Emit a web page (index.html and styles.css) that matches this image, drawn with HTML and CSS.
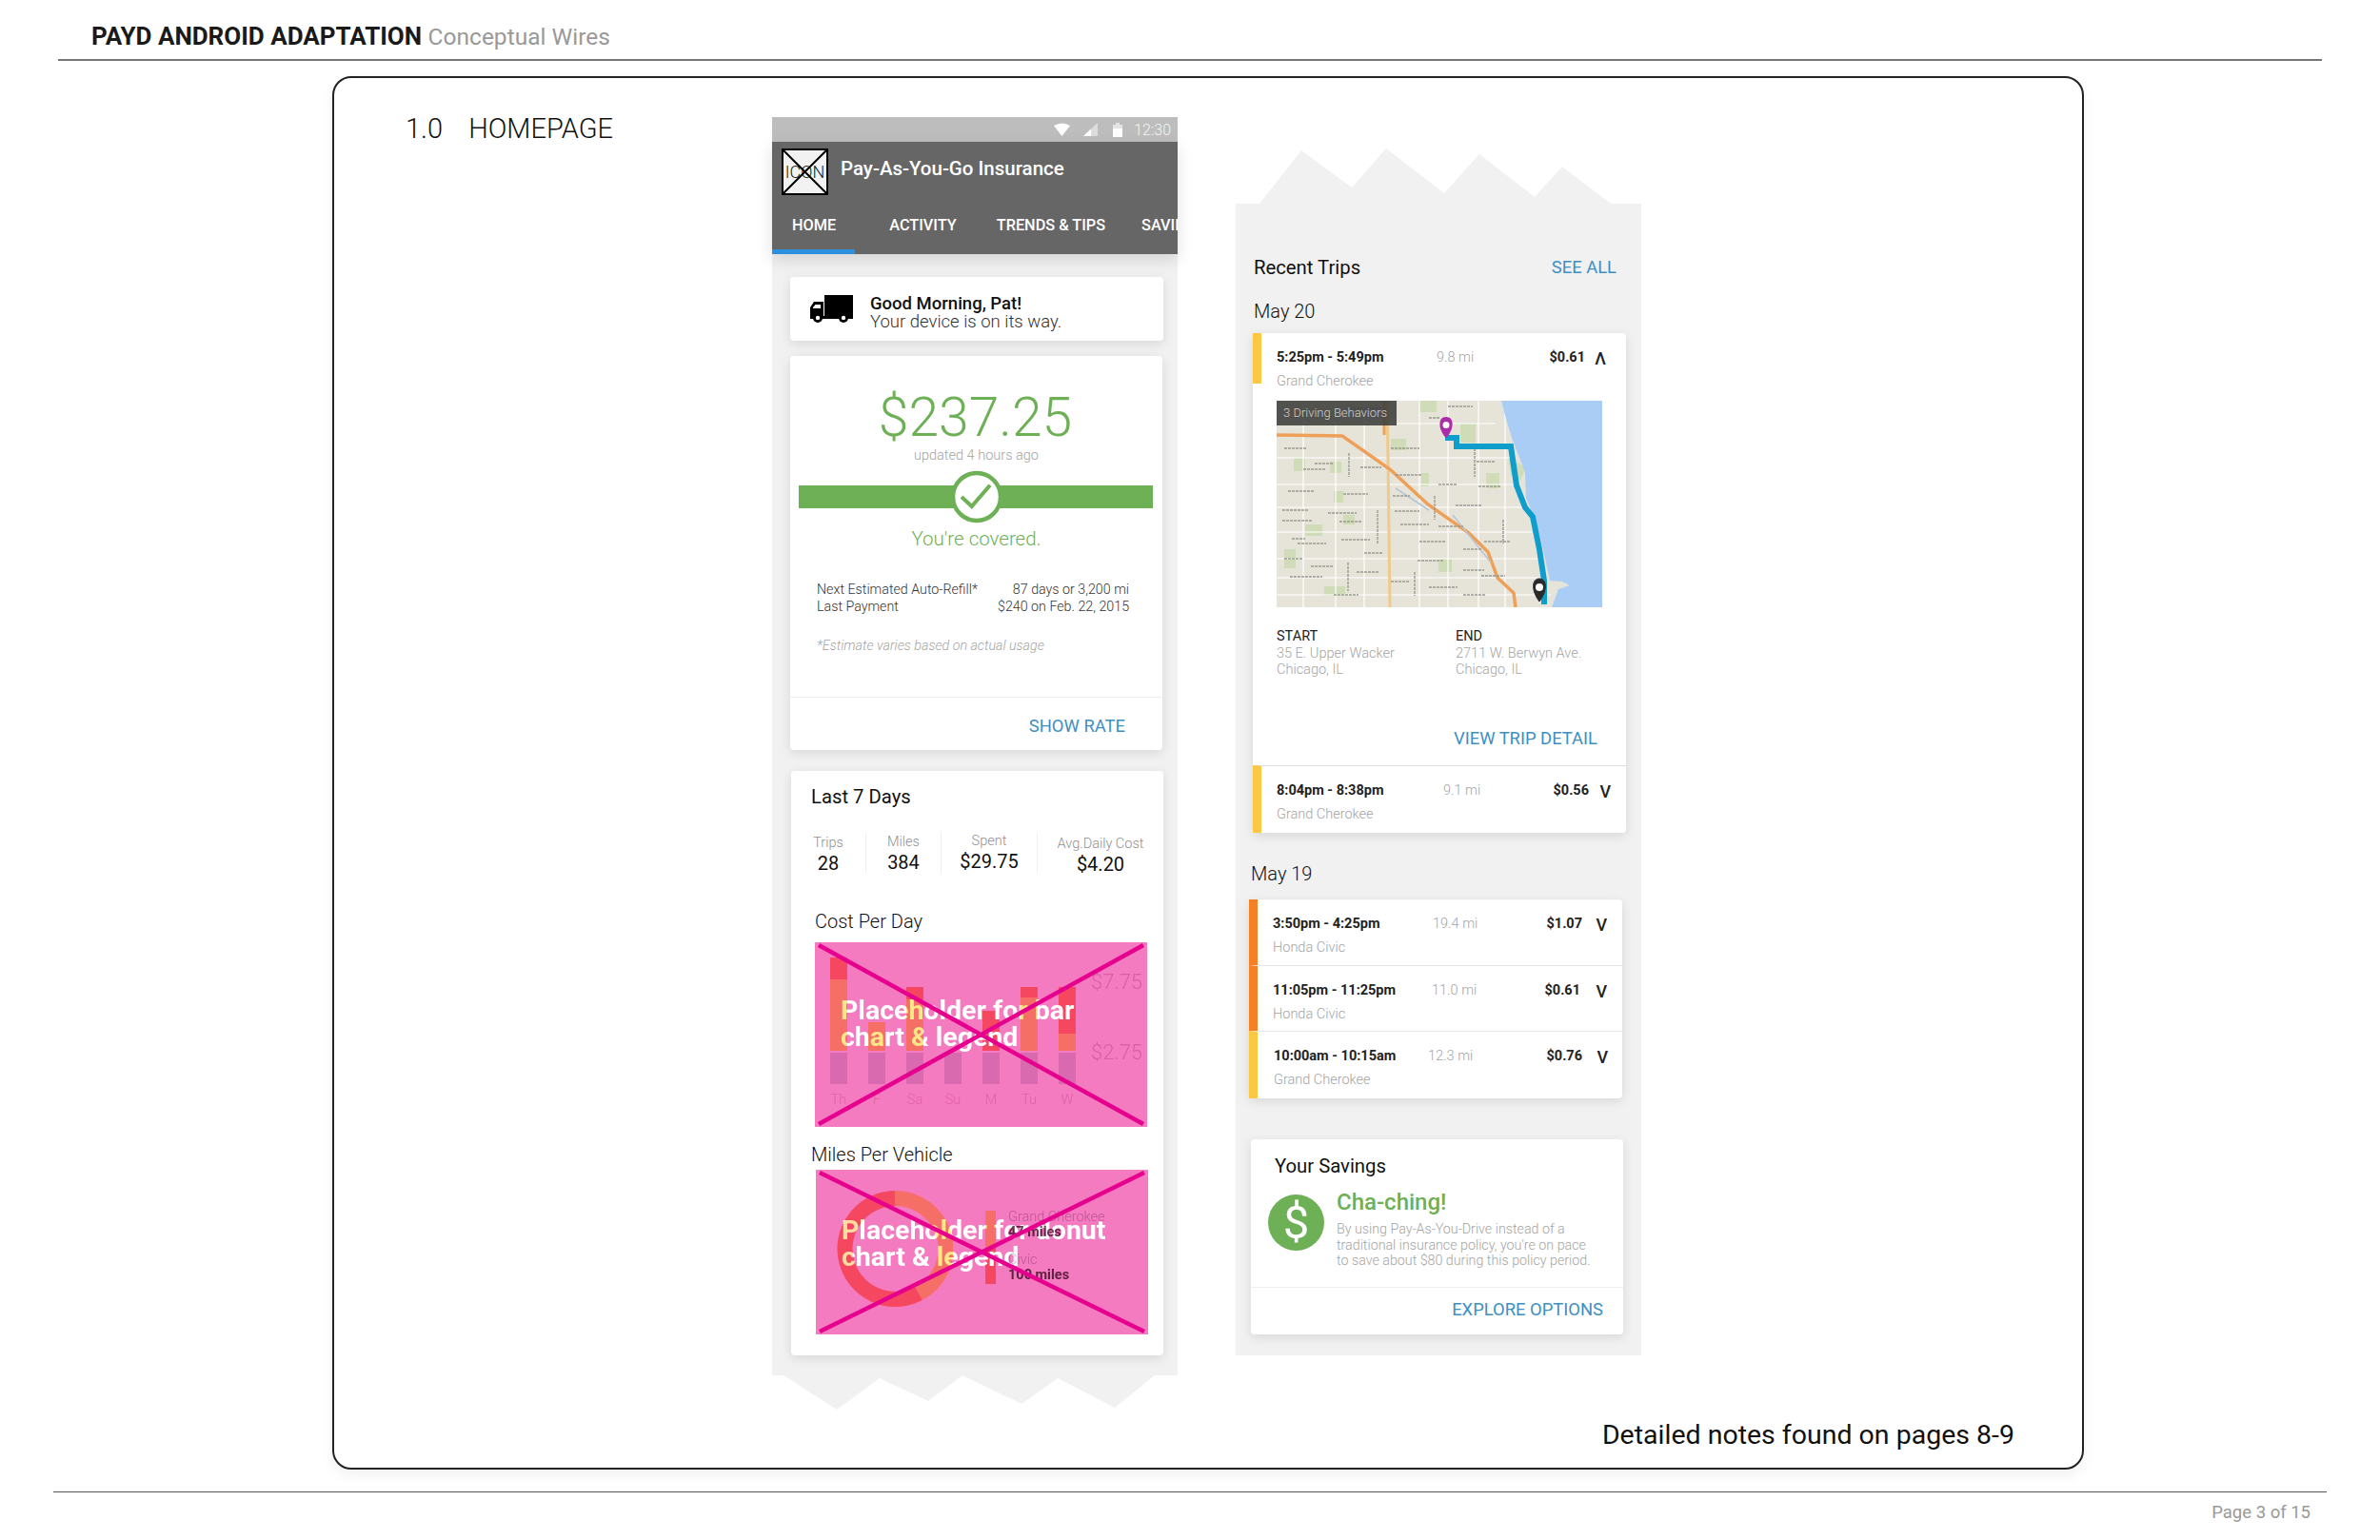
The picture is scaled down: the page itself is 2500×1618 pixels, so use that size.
FILE: index.html
```html
<!DOCTYPE html>
<html lang="en">
<head>
  <meta charset="UTF-8" />
  <title>PAYD Android Adaptation</title>
  <link rel="stylesheet" href="styles.css">
</head>
<body>

<header class="doc-head">
  <b>PAYD ANDROID ADAPTATION</b> <span>Conceptual Wires</span>
</header>

<main class="sheet">
  <div class="sheet-row">
    <h1 class="sheet-title"><span>1.0</span>HOMEPAGE</h1>

    <!-- Phone -->
    <section class="phone">
      <div class="status">
        <svg width="17" height="14" viewBox="0 0 17 14"><path d="M0 3Q8.500-2 17 3L8.500 14Z" fill="#fff"/></svg>
        <svg class="signal" width="15" height="14" viewBox="0 0 15 14"><path d="M0 14L15 0V14Z" fill="#ddd"/><path d="M0 14L8 6.500V14Z" fill="#fff"/></svg>
        <svg class="battery" width="10" height="15" viewBox="0 0 10 15"><path d="M3 0H7V2H10V15H0V2H3Z" fill="#e4e4e4"/><rect y="6" width="10" height="9" fill="#fff"/></svg>
        <span>12:30</span>
      </div>
      <div class="appbar">
        <div class="appbar-top">
          <div class="icon-box">
            <span>ICON</span>
            <svg viewBox="0 0 45 45" preserveAspectRatio="none"><path d="M0 0L45 45M45 0L0 45" stroke="#000" stroke-width="2"/></svg>
          </div>
          <div class="app-title">Pay-As-You-Go Insurance</div>
        </div>
        <nav class="tabs">
          <a class="tab active">HOME</a>
          <a class="tab tab-activity">ACTIVITY</a>
          <a class="tab tab-trends">TRENDS &amp; TIPS</a>
          <a class="tab tab-save">SAVINGS</a>
        </nav>
      </div>

      <div class="card greet">
        <svg width="46" height="30" viewBox="0 0 46 30">
          <rect x="15" y="0" width="30" height="23" fill="#000"/>
          <path d="M0 24V13L4 7H14V24Z" fill="#000"/>
          <path d="M3 13L5.500 10H11V14H3Z" fill="#fff"/>
          <rect x="0" y="22" width="45" height="3" fill="#000"/>
          <circle cx="8" cy="24" r="5" fill="#000"/><circle cx="8" cy="24" r="2.200" fill="#fff"/>
          <circle cx="35" cy="24" r="5" fill="#000"/><circle cx="35" cy="24" r="2.200" fill="#fff"/>
        </svg>
        <div class="greet-text">
          <div class="greet-name">Good Morning, Pat!</div>
          <div class="greet-sub">Your device is on its way.</div>
        </div>
      </div>

      <div class="card balance">
        <div class="amount">$237.25</div>
        <div class="updated">updated 4 hours ago</div>
        <div class="meter">
          <svg width="56" height="56" viewBox="0 0 56 56">
            <circle cx="28" cy="28" r="25" fill="#fff" stroke="#6db056" stroke-width="4.500"/>
            <path d="M12 28L22.700 38L42 15.700" fill="none" stroke="#6db056" stroke-width="4"/>
          </svg>
        </div>
        <div class="covered">You're covered.</div>
        <div class="refill">
          <div>Next Estimated Auto-Refill*</div><div>87 days or 3,200 mi</div>
          <div>Last Payment</div><div>$240 on Feb. 22, 2015</div>
        </div>
        <div class="estimate">*Estimate varies based on actual usage</div>
        <div class="card-foot balance-foot"><a class="link">SHOW RATE</a></div>
      </div>

      <div class="card week">
        <h3 class="week-title">Last 7 Days</h3>
        <div class="stats">
          <div class="stat stat-trips"><small>Trips</small>28</div>
          <div class="stat stat-miles"><small>Miles</small>384</div>
          <div class="stat stat-spent"><small>Spent</small>$29.75</div>
          <div class="stat stat-avg"><small>Avg.Daily Cost</small>$4.20</div>
        </div>

        <h4 class="chart-title cost-title">Cost Per Day</h4>
        <div class="holder bar-holder">
          <div class="holder-text">Placeholder for bar<br>chart &amp; legend</div>
          <div class="bars">
            <div class="col"><div class="stack"><i class="dark seg-23"></i><i class="soft seg-75"></i></div><b></b><span>Th</span></div>
            <div class="col"><div class="stack"><i class="soft seg-30"></i></div><b></b><span>F</span></div>
            <div class="col"><div class="stack"><i class="dark seg-13"></i><i class="soft seg-54"></i></div><b></b><span>Sa</span></div>
            <div class="col"><div class="stack"></div><b></b><span>Su</span></div>
            <div class="col"><div class="stack"><i class="dark seg-42"></i></div><b></b><span>M</span></div>
            <div class="col"><div class="stack"><i class="dark seg-11"></i><i class="soft seg-56"></i></div><b></b><span>Tu</span></div>
            <div class="col"><div class="stack"><i class="dark seg-49"></i><i class="soft seg-18"></i></div><b></b><span>W</span></div>
            <div class="axis"><span>$7.75</span><span>$2.75</span></div>
          </div>
          <svg class="cross" viewBox="0 0 349 194" preserveAspectRatio="none"><path d="M4 3L345 191M345 3L4 191" stroke="#e6008e" stroke-width="4.500"/></svg>
        </div>

        <h4 class="chart-title miles-title">Miles Per Vehicle</h4>
        <div class="holder donut-holder">
          <div class="holder-text">Placeholder for donut<br>chart &amp; legend</div>
          <div class="donut-row">
            <div class="donut-wrap">
              <!-- under the label -->
              <svg width="122" height="122" viewBox="0 0 122 122">
                <path d="M86 108A53 53 0 1 1 61 8" fill="none" stroke="#f55297" stroke-width="16"/>
              </svg>
              <!-- tints the label where it crosses the ring -->
              <svg class="donut-tint" width="122" height="122" viewBox="0 0 122 122">
                <path d="M86 108A53 53 0 1 1 61 8" fill="none" stroke="#ffdca0" stroke-width="16"/>
                <path d="M61 8A53 53 0 0 1 86 108" fill="none" stroke="#ffe687" stroke-width="16"/>
              </svg>
            </div>
            <div class="legend-bars"><i class="soft"></i><i class="dark"></i></div>
            <div class="legend">
              <div class="legend-name">Grand Cherokee</div>
              <div class="legend-val">47 miles</div>
              <div class="legend-name civic">Civic</div>
              <div class="legend-val">100 miles</div>
            </div>
          </div>
          <svg class="cross" viewBox="0 0 349 173" preserveAspectRatio="none"><path d="M4 3L345 170M345 3L4 170" stroke="#e6008e" stroke-width="4.500"/></svg>
        </div>
      </div>
      <svg class="tear phone-tear" width="426" height="36" viewBox="0 0 426 36"><path d="M12 0L68 36L113 3L164 27L200 0L262 30L300 3L360 34L402 0Z" fill="#f1f1f1"/></svg>
    </section>

    <!-- Trips -->
    <section class="trips">
      <svg class="tear" width="426" height="58" viewBox="0 0 426 58"><path d="M25 58L69 2L122 41L158 0L219 47L256 6L314 51L343 19L394 58Z" fill="#f1f1f1"/></svg>
      <div class="trips-body">
        <div class="trips-head"><h3>Recent Trips</h3><a class="link">SEE ALL</a></div>
        <h4 class="day day-20">May 20</h4>

        <div class="card trip-card trip-card-a">
          <div class="trip yellow open-head row-a">
            <div class="t-time">5:25pm - 5:49pm</div><div class="t-mi">9.8 mi</div><div class="t-cost">$0.61</div><div class="t-caret">&#923;</div>
            <div class="t-car">Grand Cherokee</div>
          </div>
          <div class="map">
            <svg width="342" height="217" viewBox="0 0 342 217">
              <rect width="342" height="217" fill="#e6e3d8"/>
              <g fill="#d0dcb8">
                <rect x="18" y="60" width="12" height="14"/><rect x="56" y="64" width="12" height="12"/><rect x="60" y="95" width="10" height="12"/><rect x="120" y="40" width="16" height="12"/>
                <rect x="150" y="0" width="18" height="12"/><rect x="193" y="24" width="16" height="20"/><rect x="220" y="76" width="14" height="16"/><rect x="152" y="76" width="8" height="14"/>
                <rect x="30" y="130" width="18" height="12"/><rect x="8" y="156" width="12" height="20"/><rect x="170" y="166" width="14" height="14"/><rect x="70" y="120" width="12" height="10"/>
                <path d="M243 60L262 70L256 84L246 78Z"/><rect x="50" y="195" width="22" height="10"/>
              </g>
              <path fill="none" stroke="#fff" stroke-width="1.200" d="M0 24H230M0 60H250M0 88H255M0 112H258M0 138H268M0 166H280M0 186H284M0 204H288M28 0V217M62 0V217M92 0V217M150 0V217M180 0V217M212 0V217M240 0V217"/>
              <path d="M236 0L241 19L248 42L256 62L261 76L262 102L269 119L276 139L282 166L287 189L300 190L308 194L296 198L289 217H342V0Z" fill="#a9cdf5"/>
              <path d="M116 0L117 60L119 217" fill="none" stroke="#eecb8c" stroke-width="3"/>
              <path d="M113 0L113 36" fill="none" stroke="#e9a35c" stroke-width="3"/>
              <path d="M0 36L69 37L119 72L159 109L202 139L222 159L232 186L249 202L251 217" fill="none" stroke="#ee9f58" stroke-width="3.500"/>
              <path d="M125 92L160 115M185 120L225 170" fill="none" stroke="#b5c6d6" stroke-width="1.500"/>
              <path stroke="#9a9a90" stroke-width="1.400" fill="none" stroke-dasharray="3 1" d="M8 50H32M28 72H52M12 95H40M6 115H34M54 118H84M6 126H38M66 127H90M16 145H30M22 150H52M68 146H98M8 166H28M14 185H48M84 180H108M60 204H86M120 50H150M125 78H152M122 100H140M130 130H160M150 148H178M170 88H190M212 90H236M188 110H216M148 168H176M218 148H246M215 184H240M70 98H96M196 178H218M76 8H110M160 18H172M40 66H60M88 70H110M124 116H150M170 132H196M196 156H216M120 190H140M160 196H190M196 204H220M36 174H60M92 160H112M210 64H230M180 6H206"/>
              <path stroke="#9a9a90" stroke-width="1.400" fill="none" stroke-dasharray="3 1" d="M76 55V80M106 115V150M208 50V80M238 125V150M75 170V200M145 180V205M166 100V125"/>
              <path d="M177 39H189V48H246L252 89L261 112L269 122L276 156L281 189L281 214" fill="none" stroke="#0f9dcb" stroke-width="6"/>
              <path d="M178 38C170 28 171 18 178 18C185 18 186 28 178 38Z" fill="#aa2ea8" stroke="#aa2ea8" stroke-width="2"/>
              <circle cx="178" cy="25.500" r="3.500" fill="#fff"/>
              <path d="M276 211C267 199 268 187 276 187C284 187 285 199 276 211Z" fill="#2a2a2a" stroke="#2a2a2a" stroke-width="1"/>
              <circle cx="276" cy="196" r="4" fill="#fff"/>
            </svg>
            <div class="map-tag">3 Driving Behaviors</div>
          </div>
          <div class="route">
            <div><b>START</b>35 E. Upper Wacker<br>Chicago, IL</div>
            <div><b>END</b>2711 W. Berwyn Ave.<br>Chicago, IL</div>
          </div>
          <div class="trip-link"><a class="link">VIEW TRIP DETAIL</a></div>
          <div class="trip yellow row-b">
            <div class="t-time">8:04pm - 8:38pm</div><div class="t-mi">9.1 mi</div><div class="t-cost">$0.56</div><div class="t-caret">V</div>
            <div class="t-car">Grand Cherokee</div>
          </div>
        </div>

        <h4 class="day day-19">May 19</h4>
        <div class="card trip-card trip-card-b">
          <div class="trip orange row-c">
            <div class="t-time">3:50pm - 4:25pm</div><div class="t-mi">19.4 mi</div><div class="t-cost">$1.07</div><div class="t-caret">V</div>
            <div class="t-car">Honda Civic</div>
          </div>
          <div class="trip orange row-d">
            <div class="t-time">11:05pm - 11:25pm</div><div class="t-mi">11.0 mi</div><div class="t-cost">$0.61</div><div class="t-caret">V</div>
            <div class="t-car">Honda Civic</div>
          </div>
          <div class="trip yellow row-e">
            <div class="t-time">10:00am - 10:15am</div><div class="t-mi">12.3 mi</div><div class="t-cost">$0.76</div><div class="t-caret">V</div>
            <div class="t-car">Grand Cherokee</div>
          </div>
        </div>

        <div class="card savings">
          <h3>Your Savings</h3>
          <div class="save-row">
            <div class="dollar">$</div>
            <div>
              <div class="cha">Cha-ching!</div>
              <p>By using Pay-As-You-Drive instead of a<br>traditional insurance policy, you're on pace<br>to save about $80 during this policy period.</p>
            </div>
          </div>
          <div class="card-foot savings-foot"><a class="link">EXPLORE OPTIONS</a></div>
        </div>
      </div>
    </section>
  </div>
  <div class="sheet-note">Detailed notes found on pages 8-9</div>
</main>

<footer class="doc-foot">Page 3 of 15</footer>

</body>
</html>
```

FILE: styles.css
```css
* {
  margin: 0;
  padding: 0;
  box-sizing: border-box;
}

body {
  width: 2500px;
  height: 1618px;
  overflow: hidden;
  background: #fff;
  color: #111;
  font-family: Roboto, "Liberation Sans", sans-serif;
}

h1, h3, h4 {
  font-weight: 400;
}

/* Document frame */
.doc-head {
  height: 64px;
  margin: 0 61px;
  padding: 20px 0 0 35px;
  border-bottom: 2px solid #777;
  font-size: 26px;
  line-height: 36px;
}

.doc-head b {
  color: #1a1a1a;
}

.doc-head span {
  color: #999;
  font-size: 24.500px;
  font-weight: 400;
}

.sheet {
  display: flex;
  flex-direction: column;
  width: 1840px;
  height: 1464px;
  margin: 16px 0 0 349px;
  padding-bottom: 14px;
  border: 2px solid #222;
  border-radius: 20px;
  box-shadow: 0 6px 14px rgba(0,0,0,0.06);
}

.sheet-row {
  display: flex;
  align-items: flex-start;
}

.sheet-title {
  width: 460px;
  padding: 36px 0 0 75px;
  font-size: 29px;
  font-weight: 300;
  line-height: 34px;
}

.sheet-title span {
  margin-right: 27px;
}

.sheet-note {
  margin-top: auto;
  padding-right: 71px;
  text-align: right;
  font-size: 28.500px;
  line-height: 40px;
}

.doc-foot {
  margin: 23px 56px 0;
  padding: 10px 17px 0 0;
  border-top: 1px solid #555;
  text-align: right;
  color: #999;
  font-size: 18.500px;
  line-height: 22px;
}

/* Phone */
.phone {
  width: 426px;
  margin-top: 41px;
  background: linear-gradient(#f1f1f1, #f1f1f1) no-repeat 0 0 / 426px 1322px;
}

.status {
  display: flex;
  align-items: center;
  justify-content: flex-end;
  height: 26px;
  padding-right: 7px;
  background: #bdbdbd;
  color: #f4f4f4;
  font-size: 16px;
  font-weight: 300;
}

.status .signal {
  margin-left: 14px;
}

.status .battery {
  margin-left: 16px;
}

.status span {
  margin-left: 12px;
}

.appbar {
  height: 118px;
  background: #666;
  color: #fff;
  box-shadow: 0 6px 16px rgba(0,0,0,0.12);
  position: relative;
}

.appbar-top {
  display: flex;
  height: 58px;
  padding: 7px 0 0 10px;
}

.icon-box {
  position: relative;
  width: 49px;
  height: 49px;
  border: 2px solid #000;
  background: #f2f2f2;
  color: #222;
  font-size: 18px;
  font-weight: 300;
  line-height: 45px;
  text-align: center;
  white-space: nowrap;
}

.icon-box svg {
  position: absolute;
  left: 0;
  top: 0;
  width: 100%;
  height: 100%;
}

.app-title {
  margin: 6px 0 0 13px;
  font-size: 20.500px;
  font-weight: 500;
  line-height: 30px;
}

.tabs {
  display: flex;
  height: 60px;
  overflow: hidden;
  font-size: 16.300px;
  font-weight: 500;
  line-height: 60px;
  white-space: nowrap;
}

.tab {
  flex: none;
}

.tab.active {
  height: 60px;
  padding: 0 20px 0 21px;
  border-bottom: 5px solid #2d8fe0;
}

.tab-activity {
  margin-left: 36px;
}

.tab-trends {
  margin-left: 42px;
}

.tab-save {
  margin-left: 38px;
}

.card {
  background: #fff;
  border-radius: 4px;
  box-shadow: 0 3px 12px rgba(0,0,0,0.11);
}

.link {
  color: #3d8fc4;
  font-size: 18.400px;
  line-height: 24px;
}

.greet {
  display: flex;
  align-items: center;
  width: 392px;
  height: 67px;
  margin: 24px 0 0 19px;
  padding: 0 0 0 21px;
  gap: 17px;
  line-height: 19px;
  font-size: 18.500px;
}

.greet-text {
  padding-top: 8px;
}

.greet-name {
  font-weight: 500;
}

.greet-sub {
  font-weight: 300;
  color: #333;
}

/* Balance card */
.balance {
  display: flex;
  flex-direction: column;
  align-items: center;
  width: 391px;
  height: 414px;
  margin: 16px 0 0 19px;
  padding-top: 30px;
}

.amount {
  margin-left: -2px;
  color: #6db056;
  font-size: 57px;
  font-weight: 300;
  line-height: 70px;
}

.updated {
  margin-top: -4px;
  color: #a4a4a4;
  font-size: 14.500px;
  font-weight: 300;
  line-height: 18px;
}

.meter {
  display: flex;
  justify-content: center;
  align-items: center;
  width: 372px;
  height: 56px;
  margin: 6px 10px 0 9px;
  padding-left: 2px;
  background: linear-gradient(#6db056, #6db056) no-repeat center / 100% 24px;
}

.covered {
  margin-top: 3px;
  color: #6db056;
  font-size: 20.500px;
  font-weight: 300;
  line-height: 26px;
}

.refill {
  display: grid;
  grid-template-columns: 190px 138px;
  align-self: flex-start;
  margin: 32px 0 0 28px;
  color: #333;
  font-size: 14.250px;
  font-weight: 300;
  line-height: 17.500px;
  white-space: nowrap;
}

.refill div:nth-child(even) {
  text-align: right;
}

.estimate {
  align-self: flex-start;
  margin: 23px 0 0 28px;
  color: #a4a4a4;
  font-size: 14.250px;
  font-style: italic;
  font-weight: 300;
  line-height: 18px;
}

.card-foot {
  align-self: stretch;
  margin-top: auto;
  border-top: 1px solid #eee;
  text-align: right;
}

.balance-foot {
  height: 56px;
  padding: 18px 39px 0 0;
}

/* Last 7 days */
.week {
  width: 391px;
  height: 614px;
  margin: 22px 0 0 20px;
  padding-top: 15px;
}

.week-title {
  padding-left: 21px;
  font-size: 20.300px;
  line-height: 24px;
}

.stats {
  display: flex;
  margin-top: 26px;
  height: 42px;
  font-size: 20px;
  line-height: 25px;
  text-align: center;
}

.stat {
  border-left: 1px solid #eee;
}

.stat small {
  display: block;
  color: #909090;
  font-size: 14.500px;
  font-weight: 300;
  line-height: 18px;
}

.stat-trips {
  width: 78px;
  padding-top: 2px;
  border-left: 0;
}

.stat-miles {
  width: 79px;
  padding-top: 1px;
}

.stat-spent {
  width: 101px;
}

.stat-avg {
  width: 133px;
  padding-top: 3px;
}

.chart-title {
  font-size: 20px;
  font-weight: 300;
  line-height: 24px;
}

.cost-title {
  margin: 39px 0 0 25px;
}

.miles-title {
  margin: 17px 0 0 21px;
}

.holder {
  position: relative;
  isolation: isolate;
  width: 349px;
  background: #f57bc1;
  overflow: hidden;
}

.bar-holder {
  height: 194px;
  margin: 10px 0 0 25px;
}

.donut-holder {
  height: 173px;
  margin: 4px 0 0 26px;
}

.holder-text {
  position: absolute;
  left: 27px;
  top: 58px;
  color: #fff;
  font-size: 28.500px;
  font-weight: 700;
  line-height: 28px;
  white-space: nowrap;
}

.donut-holder .holder-text {
  top: 50px;
}

.cross {
  position: absolute;
  left: 0;
  top: 0;
  width: 100%;
  height: 100%;
}

.bars {
  display: flex;
  height: 100%;
  padding: 16px 0 0 5px;
}

.col {
  display: flex;
  flex-direction: column;
  align-items: center;
  width: 40px;
}

.stack {
  display: flex;
  flex-direction: column;
  justify-content: flex-end;
  width: 18px;
  height: 98px;
}

.stack i {
  display: block;
}

.dark {
  background: #f5475f;
}

/* sits over the label and tints it, like the source overlay */
.soft {
  background: #ffe687;
  mix-blend-mode: multiply;
}

.seg-11 { height: 11px; }
.seg-13 { height: 13px; }
.seg-18 { height: 18px; }
.seg-23 { height: 23px; }
.seg-30 { height: 30px; }
.seg-42 { height: 42px; }
.seg-49 { height: 49px; }
.seg-54 { height: 54px; }
.seg-56 { height: 56px; }
.seg-75 { height: 75px; }

.col b {
  display: block;
  width: 18px;
  height: 33px;
  margin-top: 2px;
  background: #d96ab0;
}

.col span {
  margin-top: 7px;
  color: #e062aa;
  font-size: 14.500px;
  font-weight: 300;
  line-height: 20px;
}

.axis {
  display: flex;
  flex-direction: column;
  margin-left: 5px;
  padding-top: 11px;
  gap: 44px;
  color: #d85ea6;
  font-size: 22px;
  font-weight: 300;
  line-height: 30px;
}

.donut-row {
  display: flex;
  align-items: flex-start;
  padding: 22px 0 0 22px;
}

.donut-wrap {
  display: grid;
  width: 122px;
  height: 122px;
}

.donut-wrap svg {
  display: block;
  grid-area: 1 / 1;
}

.donut-wrap .donut-tint {
  mix-blend-mode: multiply;
}

.legend-bars {
  display: flex;
  flex-direction: column;
  width: 11px;
  height: 77px;
  margin: 21px 0 0 34px;
}

.legend-bars i {
  display: block;
  flex: 1;
}

.legend {
  margin: 20px 0 0 13px;
  font-size: 14.500px;
  line-height: 16px;
  mix-blend-mode: multiply;
  white-space: nowrap;
}

.legend-name {
  color: #c8b0c8;
  font-weight: 300;
}

.legend-val {
  color: #664058;
  font-weight: 700;
}

.legend-name.civic {
  margin-top: 13px;
}

.tear {
  display: block;
}

.phone-tear {
  margin-top: 21px;
}

/* Recent trips */
.trips {
  width: 426px;
  margin: 74px 0 0 61px;
}

.trips-body {
  height: 1210px;
  padding: 55px 0 0 0;
  background: #f1f1f1;
}

.trips-head {
  display: flex;
  justify-content: space-between;
  align-items: center;
  padding: 0 26px 0 19px;
}

.trips-head h3, .savings h3 {
  font-size: 20.300px;
  line-height: 24px;
}

.day {
  font-size: 20px;
  font-weight: 300;
  line-height: 24px;
}

.day-20 {
  margin: 22px 0 11px 19px;
}

.day-19 {
  margin: 31px 0 15px 16px;
}

.trip-card {
  position: relative;
}

.trip-card-a {
  width: 392px;
  height: 525px;
  margin-left: 18px;
}

.trip-card-b {
  width: 392px;
  height: 209px;
  margin-left: 14px;
}

.trip {
  display: grid;
  grid-template-columns: var(--time) 1fr auto var(--caret);
  align-content: start;
  height: 70px;
  padding: 16.500px var(--right) 0 var(--left);
  border-left: 9px solid #fcc843;
  --left: 16px;
  --time: 168px;
  --caret: 22px;
  --right: 21px;
  font-size: 15px;
  line-height: 18px;
}

.trip.orange {
  border-left-color: #f58025;
}

.row-a.open-head {
  height: 53px;
}

.row-b {
  height: 71px;
  --time: 175px;
  --caret: 23px;
  --right: 16px;
  border-top: 1px solid #ddd;
}

.row-c {
  height: 69px;
  --time: 168px;
  --caret: 26px;
  --right: 16px;
}

.row-d {
  height: 69px;
  --time: 167px;
  --caret: 28px;
  --right: 16px;
  border-top: 1px solid #e8e8e8;
}

.row-e {
  height: 71px;
  --left: 17px;
  --time: 162px;
  --caret: 27px;
  --right: 15px;
  border-top: 1px solid #e8e8e8;
}

.t-time, .t-cost {
  font-size: 14.500px;
  font-weight: 700;
  color: #222;
}

.t-mi {
  color: #a4a4a4;
  font-size: 14.500px;
  font-weight: 300;
}

.t-caret {
  padding-top: 1px;
  text-align: right;
  font-size: 18px;
  font-weight: 500;
  color: #222;
}

.t-car {
  grid-column: 1 / -1;
  margin-top: 6px;
  color: #a4a4a4;
  font-size: 14.500px;
  font-weight: 300;
}

.map {
  position: relative;
  width: 342px;
  height: 217px;
  margin: 18px 0 0 25px;
  overflow: hidden;
}

.map svg {
  display: block;
  filter: blur(0.6px);
}

.map-tag {
  position: absolute;
  left: 0;
  top: 0;
  width: 126px;
  height: 26px;
  padding-left: 7px;
  background: rgba(60,60,58,0.88);
  color: #d0d0d0;
  font-size: 13px;
  font-weight: 300;
  line-height: 25px;
  white-space: nowrap;
}

.route {
  display: grid;
  grid-template-columns: 188px 1fr;
  margin: 22px 0 0 25px;
  color: #a4a4a4;
  font-size: 14.500px;
  font-weight: 300;
  line-height: 17.500px;
}

.route b {
  display: block;
  color: #222;
  font-weight: 400;
}

.trip-link {
  height: 40px;
  margin-top: 51.500px;
  padding-right: 30px;
  text-align: right;
}

.savings {
  display: flex;
  flex-direction: column;
  width: 391px;
  height: 205px;
  margin: 43px 0 0 16px;
  padding-top: 16px;
}

.savings h3 {
  padding-left: 25px;
}

.save-row {
  display: flex;
  margin: 12px 0 0 18px;
}

.dollar {
  flex: none;
  width: 59px;
  height: 59px;
  margin-top: 6px;
  border-radius: 50%;
  background: #6db056;
  color: #fff;
  font-size: 49px;
  font-weight: 400;
  line-height: 59px;
  text-align: center;
}

.save-row > div:last-child {
  margin-left: 13px;
}

.cha {
  color: #6db056;
  font-size: 24px;
  font-weight: 500;
  line-height: 28px;
}

.save-row p {
  margin-top: 6px;
  color: #a4a4a4;
  font-size: 14.250px;
  font-weight: 300;
  line-height: 16.500px;
  white-space: nowrap;
}

.savings-foot {
  height: 50px;
  padding: 11px 21px 0 0;
}
```
